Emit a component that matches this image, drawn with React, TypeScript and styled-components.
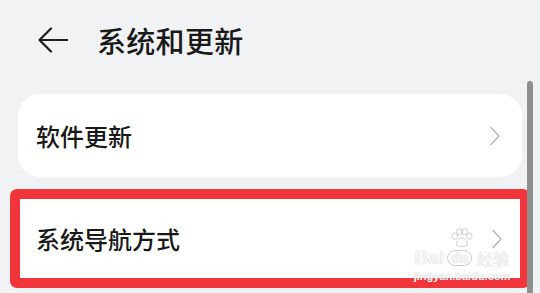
import styled, { createGlobalStyle } from "styled-components";

const GlobalStyle = createGlobalStyle`
  html, body {
    margin: 0;
    padding: 0;
    background: #f1f2f4;
  }
  body {
    font-family: "Noto Sans CJK SC", "Noto Sans", sans-serif;
    color: #191919;
  }
`;

const Screen = styled.div`
  position: relative;
  width: 540px;
  height: 293px;
  overflow: hidden;
  background: #f1f2f4;
`;

const Header = styled.div`
  display: flex;
  align-items: center;
  height: 80px;
  padding-left: 38px;
  gap: 29px;
  box-sizing: border-box;

  h1 {
    margin: 0;
    font-size: 29px;
    font-weight: 500;
    line-height: 1;
    letter-spacing: 0.3px;
  }
`;

const List = styled.div`
  display: flex;
  flex-direction: column;
  padding: 14px 18px 0 18px;
  gap: 13px;
`;

const Card = styled.div<{ $height?: number }>`
  display: flex;
  align-items: center;
  justify-content: space-between;
  height: ${(p) => p.$height ?? 83}px;
  padding: 0 21px 0 18px;
  background: #fff;
  border-radius: 22px;
  box-sizing: border-box;

  span {
    font-size: 24px;
    font-weight: 500;
    line-height: 1;
  }
`;

// red annotation frame drawn over the second row
const Highlight = styled.div`
  margin: -1px -8px 0 -8px;
  border: 10px solid #f1353a;
  border-radius: 7px;
  background: #fff;
  height: 99px;
  box-sizing: border-box;

  ${Card} {
    height: 79px;
    padding: 0 17px 0 16px;
    border-radius: 0;
  }
`;

const ScrollBar = styled.div`
  position: absolute;
  right: 7px;
  top: 81px;
  bottom: 0;
  width: 6px;
  background: #8f8f8f;
  border-radius: 3px 3px 0 0;
`;

const Watermark = styled.div`
  position: absolute;
  left: 410px;
  top: 228px;
  width: 104px;
  display: flex;
  flex-direction: column;
  align-items: center;
  pointer-events: none;
  color: rgba(255, 255, 255, 0.9);
  text-shadow: 0 0 1px rgba(150, 150, 150, 0.75);
  font-family: "Liberation Sans", "Noto Sans CJK SC", sans-serif;

  .row {
    display: flex;
    align-items: center;
    gap: 3px;
    font-size: 19px;
    line-height: 1;
    font-weight: 700;
  }
  .du {
    font-size: 14px;
    border: 1px solid rgba(170, 170, 170, 0.6);
    border-radius: 8px;
    padding: 0 3px;
  }
  .cn {
    font-family: "Noto Sans CJK SC", sans-serif;
    font-size: 16px;
    font-weight: 400;
    margin-left: 2px;
  }
  .url {
    font-size: 11px;
    font-weight: 700;
    margin-top: 3px;
  }
`;

const Chevron = () => (
  <svg width="12" height="20" viewBox="0 0 12 20">
    <path d="M2 1.5 L10 10 L2 18.5" fill="none" stroke="#b8b8b8" strokeWidth="1.6" strokeLinecap="round" strokeLinejoin="round" />
  </svg>
);

const BackArrow = () => (
  <svg width="30" height="27" viewBox="0 0 30 27">
    <path d="M13 1.5 L1.5 13 L13 24.5 M1.5 13 H29.5" fill="none" stroke="#1e1e1e" strokeWidth="2.2" strokeLinecap="round" strokeLinejoin="round" />
  </svg>
);

const Paw = () => (
  <svg width="26" height="20" viewBox="0 0 26 22">
    <g fill="none" stroke="rgba(170,170,170,0.6)" strokeWidth="1">
      <ellipse cx="5" cy="9" rx="3" ry="3.5" />
      <ellipse cx="10" cy="4" rx="3" ry="3.5" />
      <ellipse cx="16" cy="4" rx="3" ry="3.5" />
      <ellipse cx="21" cy="9" rx="3" ry="3.5" />
      <path d="M7 19 C7 13 10 11 13 11 C16 11 19 13 19 19 C16 21 10 21 7 19 Z" />
    </g>
  </svg>
);

export default function App() {
  return (
    <Screen>
      <GlobalStyle />
      <Header>
        <BackArrow />
        <h1>系统和更新</h1>
      </Header>
      <List>
        <Card>
          <span>软件更新</span>
          <Chevron />
        </Card>
        <Highlight>
          <Card>
            <span>系统导航方式</span>
            <Chevron />
          </Card>
        </Highlight>
      </List>
      <ScrollBar />
      <Watermark>
        <Paw />
        <div className="row">
          <span>Bai</span>
          <span className="du">du</span>
          <span className="cn">经验</span>
        </div>
        <div className="url">jingyan.baidu.com</div>
      </Watermark>
    </Screen>
  );
}
